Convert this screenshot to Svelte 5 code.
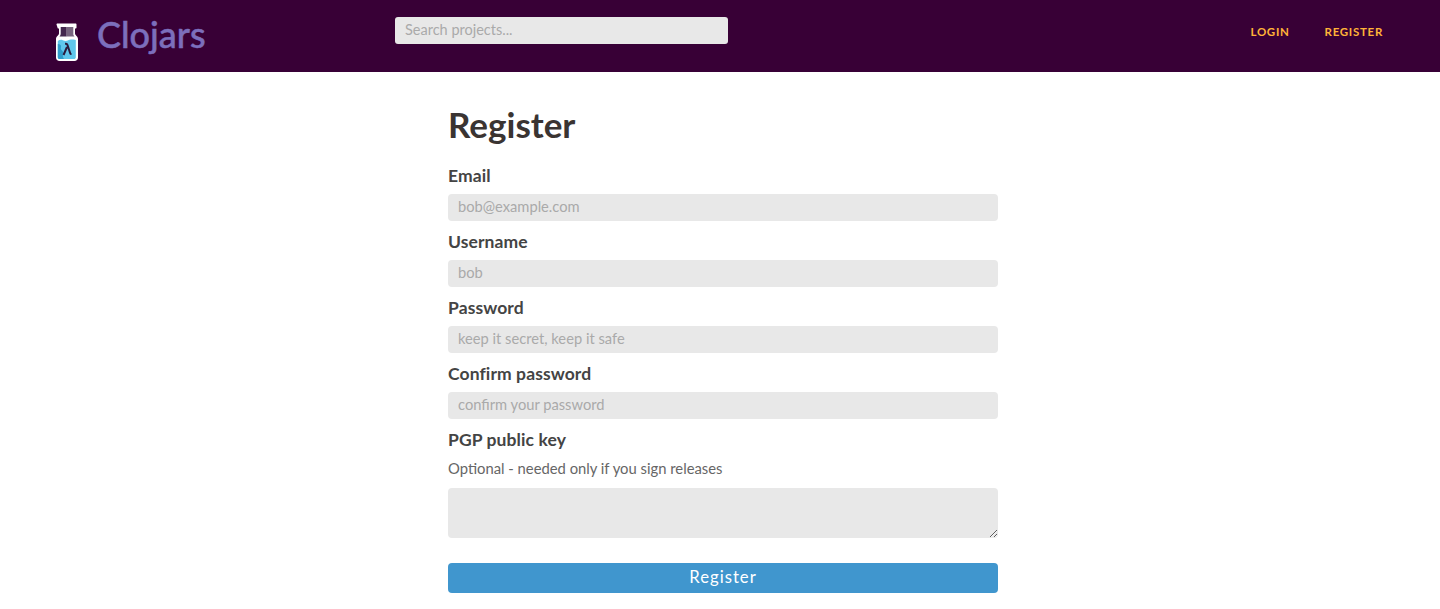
<script>
  const fields = [
    { label: 'Email', placeholder: 'bob@example.com', type: 'email' },
    { label: 'Username', placeholder: 'bob', type: 'text' },
    { label: 'Password', placeholder: 'keep it secret, keep it safe', type: 'password' },
    { label: 'Confirm password', placeholder: 'confirm your password', type: 'password' }
  ];
</script>

<header class="topbar">
  <a class="brand" href="#home">
    <svg class="brand__logo" width="26" height="40" viewBox="0 0 26 40">
      <path d="M2.500 1.500c0-.6.4-1 1-1h18c.6 0 1 .4 1 1v3c0 .6-.4 1-1 1h-.5v5c0 1.600 3 3 3 5.500v18.500c0 2-1.500 3.500-3.500 3.500H5.500c-2 0-3.500-1.500-3.500-3.500V16c0-2.500 3-3.900 3-5.500v-5h-.5c-.6 0-1-.4-1-1z" fill="#fff"/>
      <path d="M6.700 4h6v9.500H5.500c.8-.7 1.200-1.500 1.200-2.500z" fill="#43284f"/>
      <path d="M12.700 4h6.600v7c0 1 .5 1.800 1.300 2.500h-7.900z" fill="#77657f"/>
      <path d="M3.800 18c1.500-1 3-1.500 5-.8s3 1.200 5 .3 4-1.200 8-.5v17.200c0 1-.8 1.800-1.800 1.800H5.600c-1 0-1.800-.8-1.800-1.800z" fill="#60c6ec"/>
      <path d="M3.800 21c2.500.3 3.700 1.200 3.200 3-.4 1.500-.2 2.500 1 3.500 1.300 1.100 1.500 2.500 1 4-.4 1.500 0 3 1 4.500H5.600c-1 0-1.800-.8-1.800-1.800z" fill="#2f9ccb"/>
      <path d="M9.500 32l3.500-8M11 20.800h1c.8 0 1.200.3 1.500 1.200l2.600 8c.2.800.6 1.100 1.400 1.100" fill="none" stroke="#2b1a3d" stroke-width="2"/>
    </svg>
    <span class="brand__name">Clojars</span>
  </a>
  <input class="search" type="search" placeholder="Search projects..." />
  <nav class="nav">
    <a href="#login">Login</a>
    <a href="#register">Register</a>
  </nav>
</header>

<main class="content">
  <h1>Register</h1>
  <form class="form" onsubmit={(e) => e.preventDefault()}>
    {#each fields as field}
      <label class="form__label" for={field.label}>{field.label}</label>
      <input class="form__input" id={field.label} type={field.type} placeholder={field.placeholder} />
    {/each}
    <label class="form__label" for="pgp">PGP public key</label>
    <p class="form__hint">Optional - needed only if you sign releases</p>
    <textarea class="form__input form__textarea" id="pgp"></textarea>
    <button class="form__button" type="submit">Register</button>
  </form>
</main>

<style>
  :global(body) {
    background: #fff;
    color: #3f3a38;
    font-family: Lato, "Open Sans", sans-serif;
    overflow: hidden;
  }
  .topbar {
    height: 72px;
    background: #380036;
    display: flex;
    align-items: flex-start;
    box-sizing: border-box;
    padding-left: 54px;
  }
  .brand {
    display: flex;
    align-items: flex-start;
    text-decoration: none;
    width: 341px;
    padding-top: 20px;
  }
  .brand__logo {
    display: block;
    margin-top: 3px;
  }
  .brand__name {
    margin-left: 17px;
    color: #7c6fbc;
    font-size: 36px;
    font-weight: 500;
    line-height: 29px;
    -webkit-text-stroke: 0.5px #7c6fbc;
  }
  .search {
    margin-top: 17px;
    width: 333px;
    height: 27px;
    box-sizing: border-box;
    border: none;
    border-radius: 3px;
    background: #e8e8e8;
    padding: 0 10px 2px;
    font: 14.500px Lato, sans-serif;
    outline: none;
  }
  input::placeholder {
    color: #aaa;
    opacity: 1;
  }
  .nav {
    margin-left: auto;
    margin-right: 57px;
    margin-top: 25px;
    display: flex;
    gap: 35px;
  }
  .nav a {
    color: #ffb338;
    font-size: 11.500px;
    font-weight: 700;
    line-height: 14px;
    letter-spacing: 0.700px;
    text-transform: uppercase;
    text-decoration: none;
  }
  .content {
    width: 550px;
    margin-left: 448px;
    padding-top: 31px;
  }
  h1 {
    margin: 0;
    font-size: 35px;
    font-weight: 700;
    line-height: 42px;
    color: #3a3432;
  }
  .form {
    display: flex;
    flex-direction: column;
    padding-top: 20px;
  }
  .form__label {
    font-size: 17.500px;
    font-weight: 700;
    line-height: 22px;
    letter-spacing: 0.100px;
    color: #444;
    margin-bottom: 7px;
  }
  .form__input {
    height: 27px;
    box-sizing: border-box;
    border: none;
    border-radius: 4px;
    background: #e8e8e8;
    padding: 0 10px 4px;
    margin-bottom: 10px;
    font: 14.700px Lato, sans-serif;
    outline: none;
  }
  .form__hint {
    margin: 0 0 10px;
    font-size: 14.800px;
    line-height: 20px;
    color: #666;
  }
  .form__textarea {
    height: 50px;
    margin-bottom: 25px;
    display: block;
    resize: vertical;
  }
  .form__button {
    height: 30px;
    border: none;
    border-radius: 4px;
    background: #4096ce;
    color: #fff;
    font: 16.700px Lato, sans-serif;
    letter-spacing: 1px;
    padding-bottom: 3px;
  }
</style>
